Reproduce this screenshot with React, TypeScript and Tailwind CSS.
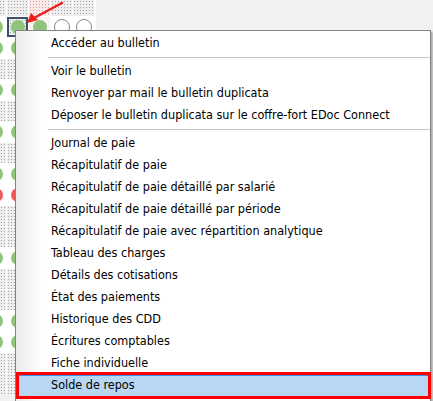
import React from 'react';

type Cell = 'g' | 'r' | 'd' | 'o' | 'sel' | 'p' | 'gp';

const dotted =
  'bg-[#eeeeee] bg-[radial-gradient(#a3a3a3_0.55px,transparent_0.85px)] bg-[length:3px_3px]';

const rowTypes: Cell[] = ['g', 'g', 'd', 'g', 'd', 'g', 'd', 'g', 'r', 'd', 'd', 'g', 'd', 'd', 'g', 'g', 'd', 'd'];

const menuGroups: string[][] = [
  ['Accéder au bulletin'],
  ['Voir le bulletin', 'Renvoyer par mail le bulletin duplicata', 'Déposer le bulletin duplicata sur le coffre-fort EDoc Connect'],
  [
    'Journal de paie',
    'Récapitulatif de paie',
    'Récapitulatif de paie détaillé par salarié',
    'Récapitulatif de paie détaillé par période',
    'Récapitulatif de paie avec répartition analytique',
    'Tableau des charges',
    'Détails des cotisations',
    'État des paiements',
    'Historique des CDD',
    'Écritures comptables',
    'Fiche individuelle',
    'Solde de repos',
  ],
];

function GridCell({ type, h }: { type: Cell; h: string }) {
  if (type === 'd') return <div className={`w-[21px] ${h} shrink-0 ${dotted}`} />;
  if (type === 'p')
    return <div className={`w-[21px] ${h} shrink-0 bg-[#fbe9e9] bg-[radial-gradient(#c9a0a0_0.6px,transparent_0.9px)] bg-[length:3px_3px]`} />;
  if (type === 'sel')
    return (
      <div className={`w-[21px] ${h} shrink-0 flex items-center justify-center border-2 border-[#3c5363] ${dotted}`}>
        <div className="w-[14px] h-[14px] rounded-full bg-[#8fc47a]" />
      </div>
    );
  const bg = type === 'gp' ? 'bg-[#fdf1f1]' : 'bg-white';
  return (
    <div className={`w-[21px] ${h} shrink-0 flex items-center justify-center ${bg}`}>
      {type === 'o' ? (
        <div className="w-[16px] h-[16px] rounded-full border border-[#8a8a8a] bg-white" />
      ) : (
        <div className={`w-[14px] h-[14px] rounded-full ${type === 'r' ? 'bg-[#f25a5a]' : 'bg-[#8fc47a]'}`} />
      )}
    </div>
  );
}

export default function App() {
  return (
    <div
      className="relative w-[433px] h-[401px] overflow-hidden bg-[#f1f1f1] text-black"
      style={{ fontFamily: "Tahoma, 'DejaVu Sans Condensed', 'DejaVu Sans', sans-serif" }}
    >
      {/* planning grid behind the menu */}
      <div className="flex flex-col gap-px bg-white w-[100px] ml-[-4px]">
        <div className="flex gap-px">
          <div className={`w-[10px] h-[16px] shrink-0 ${dotted}`} />
          <GridCell type="d" h="h-[16px]" />
          <GridCell type="p" h="h-[16px]" />
          <GridCell type="d" h="h-[16px]" />
          <GridCell type="d" h="h-[16px]" />
        </div>
        {rowTypes.map((t, i) => (
          <div key={i} className="flex gap-px">
            <div className="w-[10px] h-[20px] shrink-0 overflow-hidden flex justify-end">
              <GridCell type={t} h="h-[20px]" />
            </div>
            {i === 0 ? (
              <>
                <GridCell type="sel" h="h-[20px]" />
                <GridCell type="gp" h="h-[20px]" />
                <GridCell type="o" h="h-[20px]" />
                <GridCell type="o" h="h-[20px]" />
              </>
            ) : (
              <>
                <GridCell type={t} h="h-[20px]" />
                <GridCell type="d" h="h-[20px]" />
                <GridCell type="d" h="h-[20px]" />
                <GridCell type="d" h="h-[20px]" />
              </>
            )}
          </div>
        ))}
      </div>

      {/* red arrow annotation */}
      <svg className="absolute left-0 top-0" width="80" height="30" viewBox="0 0 80 30">
        <line x1="62" y1="3" x2="34" y2="18" stroke="#ee1c1c" strokeWidth="2.5" strokeLinecap="round" />
        <polygon points="27,23 31,13 38,20" fill="#ee1c1c" />
      </svg>

      {/* context menu */}
      <div className="absolute left-[15px] top-[30px] w-[416px] h-[400px] border border-[#848484] bg-white bg-[linear-gradient(to_right,#ececec_0px,#ffffff_26px)] shadow-[2px_2px_2px_rgba(0,0,0,0.3)] pt-px text-[12.5px]">
        {menuGroups.map((group, gi) => (
          <div key={gi}>
            {gi > 0 && <div className="ml-[32px] mr-0 mt-[3px] mb-[2px] h-px bg-[#c6c6c6]" />}
            {group.map((label) =>
              label === 'Solde de repos' ? (
                <div
                  key={label}
                  className="h-[23px] pl-[35px] leading-[22px] bg-[linear-gradient(to_bottom,#ffffff_0px,#ffffff_1px,#3392ea_1px,#3392ea_2px,#b7d7f3_2px)]"
                >
                  {label}
                </div>
              ) : (
                <div key={label} className="h-[22px] pl-[35px] leading-[22px] whitespace-nowrap">
                  {label}
                </div>
              )
            )}
          </div>
        ))}
      </div>

      {/* red highlight annotation */}
      <div className="absolute left-[16px] top-[372px] w-[415px] h-[27px] border-[3px] border-[#ff0000]" />
    </div>
  );
}
